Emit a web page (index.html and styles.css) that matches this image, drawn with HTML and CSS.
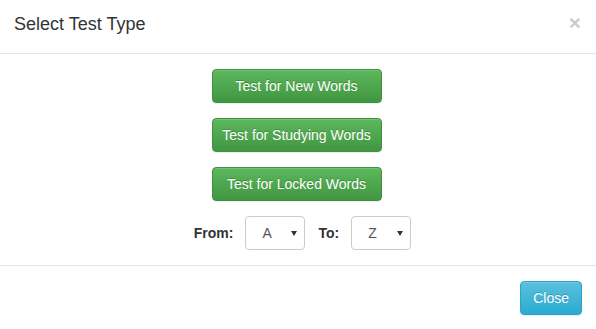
FILE: index.html
```html
<!DOCTYPE html>
<html>
<head>
    <link rel="stylesheet" href="styles.css">
</head>
<body>
    <div class="modal">
        <div class="modal-header">
            <h4 class="modal-title">Select Test Type</h4>
            <button class="close" type="button">&times;</button>
        </div>
        <div class="modal-body">
            <button class="btn btn-success btn-test">Test for New Words</button>
            <button class="btn btn-success btn-test">Test for Studying Words</button>
            <button class="btn btn-success btn-test">Test for Locked Words</button>
            <div class="range">
                <label for="fromLetter">From:</label>
                <span class="select-wrap">
                    <select id="fromLetter">
                        <option>A</option>
                    </select>
                </span>
                <label for="toLetter" class="to-label">To:</label>
                <span class="select-wrap">
                    <select id="toLetter">
                        <option>Z</option>
                    </select>
                </span>
            </div>
        </div>
        <div class="modal-footer">
            <button class="btn btn-info">Close</button>
        </div>
    </div>
</body>
</html>
```

FILE: styles.css
```css
body {
    margin: 0;
    font-family: "Liberation Sans", Arial, sans-serif;
    font-size: 14px;
    color: #333;
    background: #fff;
}
.modal {
    width: 596px;
    height: 329px;
    box-sizing: border-box;
    display: flex;
    flex-direction: column;
}
.modal-header {
    display: flex;
    justify-content: space-between;
    align-items: flex-start;
    padding: 12px 15px 16px 14px;
    border-bottom: 1px solid #e5e5e5;
}
.modal-title {
    margin: 0;
    font-size: 18px;
    font-weight: normal;
    line-height: 25px;
}
.close {
    border: 0;
    background: none;
    padding: 0;
    margin-top: 0;
    font-family: "Liberation Sans", Arial, sans-serif;
    font-size: 21px;
    font-weight: bold;
    line-height: 1;
    color: #000;
    opacity: 0.2;
    text-shadow: 0 1px 0 #fff;
}
.modal-body {
    display: flex;
    flex-direction: column;
    align-items: center;
    gap: 15px;
    padding: 15px 15px 15px 12px;
    border-bottom: 1px solid #e5e5e5;
}
.btn {
    height: 34px;
    box-sizing: border-box;
    padding: 6px 8px;
    font-family: "Liberation Sans", Arial, sans-serif;
    font-size: 14px;
    line-height: 20px;
    white-space: nowrap;
    color: #fff;
    border-radius: 4px;
    text-shadow: 0 -1px 0 rgba(0, 0, 0, 0.2);
    box-shadow: inset 0 1px 0 rgba(255, 255, 255, 0.15), 0 1px 1px rgba(0, 0, 0, 0.075);
    cursor: pointer;
}
.btn-success {
    background: linear-gradient(to bottom, #5cb85c 0, #419641 100%);
    border: 1px solid #3e8f3e;
}
.btn-test {
    width: 170px;
}
.btn-info {
    padding: 6px 12px;
    background: linear-gradient(to bottom, #5bc0de 0, #2aabd2 100%);
    border: 1px solid #28a4c9;
}
.range {
    display: flex;
    align-items: center;
    padding-left: 12px;
}
.range label {
    font-weight: bold;
    margin-right: 12px;
}
.range .to-label {
    margin-left: 13px;
    margin-right: 12px;
}
.select-wrap {
    position: relative;
    display: inline-block;
}
.select-wrap::after {
    content: "";
    position: absolute;
    right: 8px;
    top: 15px;
    border-left: 3px solid transparent;
    border-right: 3px solid transparent;
    border-top: 5px solid #333;
    pointer-events: none;
}
.select-wrap select {
    appearance: none;
    -webkit-appearance: none;
    width: 60px;
    height: 34px;
    padding: 6px 12px 6px 16px;
    font-family: "Liberation Sans", Arial, sans-serif;
    font-size: 14px;
    color: #555;
    background: #fff;
    border: 1px solid #ccc;
    border-radius: 4px;
}
.modal-footer {
    display: flex;
    justify-content: flex-end;
    padding: 15px 14px 15px 15px;
}
```
